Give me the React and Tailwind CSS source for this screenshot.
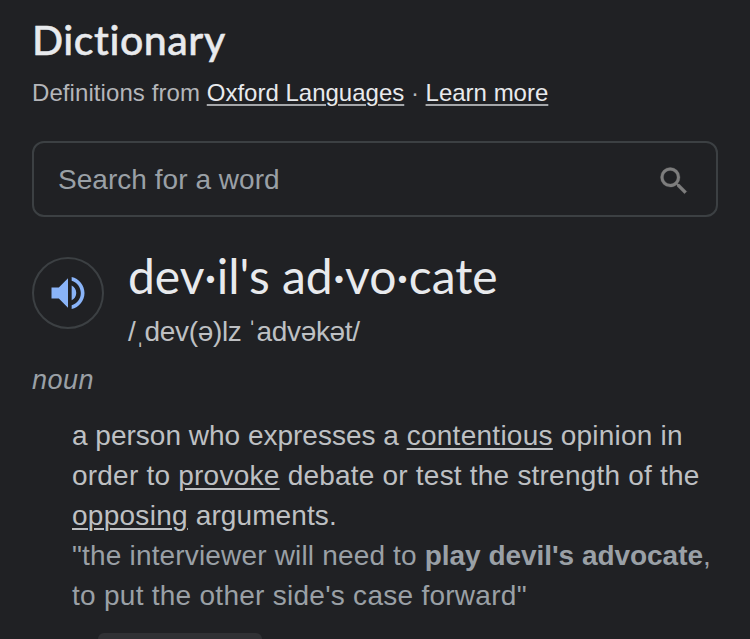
import React from "react";

const SearchIcon = () => (
  <svg viewBox="0 0 24 24" className="mt-1 size-9 fill-[#7d7d7d] stroke-[#7d7d7d]">
    <path
      d="M15.5 14h-.79l-.28-.27A6.471 6.471 0 0 0 16 9.5 6.5 6.5 0 1 0 9.5 16c1.61 0 3.09-.59 4.23-1.57l.27.28v.79l5 4.99L20.49 19l-4.99-5zm-6 0C7.01 14 5 11.99 5 9.5S7.01 5 9.5 5 14 7.01 14 9.5 11.99 14 9.5 14z"
      strokeWidth="0.2"
    />
  </svg>
);

const SpeakerIcon = () => (
  <svg viewBox="0 0 24 24" className="size-11 fill-[#8ab4f8]">
    <path d="M3 9v6h4l5 5V4L7 9H3zm13.5 3c0-1.77-1.02-3.29-2.5-4.03v8.05c1.48-.73 2.5-2.25 2.5-4.02zM14 3.23v2.06c2.89.86 5 3.54 5 6.71s-2.11 5.85-5 6.71v2.06c4.01-.91 7-4.49 7-8.77s-2.99-7.86-7-8.77z" />
  </svg>
);

const Term = ({ children }) => (
  <span className="tracking-[0.27px] underline decoration-2 underline-offset-[3px]">
    {children}
  </span>
);

const SourceLink = ({ children }) => (
  <span className="text-[#e8eaed] underline decoration-[#a5a7aa] decoration-2 underline-offset-[3px]">
    {children}
  </span>
);

const App = () => {
  return (
    <div className="flex h-[639px] w-[750px] flex-col overflow-hidden bg-[#202124] px-8 font-['Liberation_Sans',Arial,sans-serif] whitespace-nowrap text-[#bec0c3]">
      <h1 className="mt-[14px] font-['Lato',sans-serif] text-[41px] leading-[52px] font-medium tracking-[0.55px] text-[#e8eaed] [-webkit-text-stroke:0.5px_#e8eaed]">
        Dictionary
      </h1>
      <p className="mt-[11px] text-2xl text-[#b4b6ba]">
        <span className="tracking-[0.08px]">Definitions from </span>
        <SourceLink>Oxford Languages</SourceLink> · <SourceLink>Learn more</SourceLink>
      </p>

      <div className="mt-8 flex h-[76px] shrink-0 items-center justify-between rounded-xl border-2 border-[#3c4043] px-6 text-[28px] text-[#9aa0a6]">
        <span className="pt-0.5 tracking-[0.04px]">Search for a word</span>
        <SearchIcon />
      </div>

      <div className="mt-[31px] flex gap-6">
        <div className="mt-[9px] flex size-[72px] shrink-0 items-center justify-center rounded-full border-2 border-[#3c4043]">
          <SpeakerIcon />
        </div>
        <div>
          <h2 className="font-['Lato',sans-serif] text-[48px] leading-[56px] tracking-[-0.03px] text-[#e8eaed]">
            dev·il's ad·vo·cate
          </h2>
          <p className="mt-2 text-[28px] leading-10 tracking-[-0.32px] [word-spacing:-1.5px]">
            /ˌdev(ə)lz ˈadvəkət/
          </p>
        </div>
      </div>

      <p className="mt-2 text-[27px] leading-10 tracking-[0.5px] text-[#9aa0a6] italic">noun</p>

      <div className="mt-4 pl-10 text-[28px] leading-10">
        <p>
          a person who expresses a <Term>contentious</Term>
          <span className="tracking-[0.2px]"> opinion in</span>
        </p>
        <p className="tracking-[0.21px]">
          order to <Term>provoke</Term> debate or test the strength of the
        </p>
        <p className="tracking-[0.1px]">
          <Term>opposing</Term> arguments.
        </p>
        <div className="text-[#9aa0a6]">
          <p className="tracking-[0.17px]">
            "the interviewer will need to{" "}
            <b className="tracking-[-0.04px]">play devil's advocate</b>,
          </p>
          <p className="tracking-[0.27px]">to put the other side's case forward"</p>
        </div>
      </div>

      <div className="mt-[17px] ml-[66px] h-8 w-[164px] shrink-0 rounded-md bg-[#303134]" />
    </div>
  );
};

export default App;
